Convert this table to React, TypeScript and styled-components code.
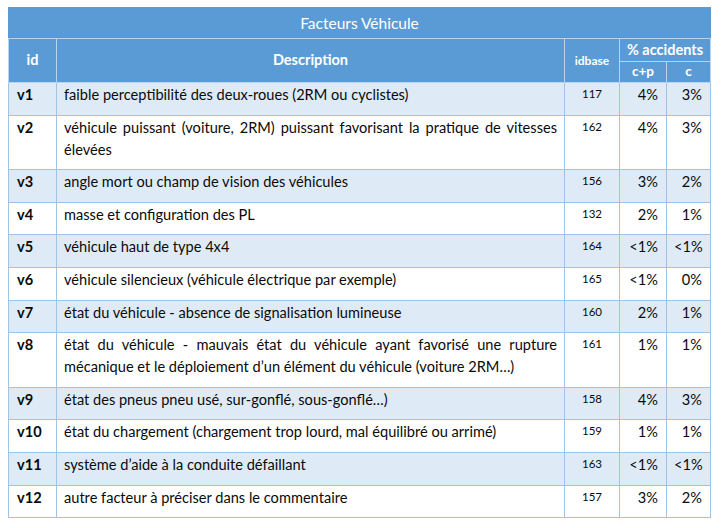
import React from "react";
import styled, { createGlobalStyle } from "styled-components";

interface Factor {
  id: string;
  description: string;
  idbase: number;
  cp: string;
  c: string;
}

const factors: Factor[] = [
  { id: "v1", description: "faible perceptibilité des deux-roues (2RM ou cyclistes)", idbase: 117, cp: "4%", c: "3%" },
  { id: "v2", description: "véhicule puissant (voiture, 2RM) puissant favorisant la pratique de vitesses élevées", idbase: 162, cp: "4%", c: "3%" },
  { id: "v3", description: "angle mort ou champ de vision des véhicules", idbase: 156, cp: "3%", c: "2%" },
  { id: "v4", description: "masse et configuration des PL", idbase: 132, cp: "2%", c: "1%" },
  { id: "v5", description: "véhicule haut de type 4x4", idbase: 164, cp: "<1%", c: "<1%" },
  { id: "v6", description: "véhicule silencieux (véhicule électrique par exemple)", idbase: 165, cp: "<1%", c: "0%" },
  { id: "v7", description: "état du véhicule - absence de signalisation lumineuse", idbase: 160, cp: "2%", c: "1%" },
  { id: "v8", description: "état du véhicule - mauvais état du véhicule ayant favorisé une rupture mécanique et le déploiement d’un élément du véhicule (voiture 2RM…)", idbase: 161, cp: "1%", c: "1%" },
  { id: "v9", description: "état des pneus pneu usé, sur-gonflé, sous-gonflé…)", idbase: 158, cp: "4%", c: "3%" },
  { id: "v10", description: "état du chargement (chargement trop lourd, mal équilibré ou arrimé)", idbase: 159, cp: "1%", c: "1%" },
  { id: "v11", description: "système d’aide à la conduite défaillant", idbase: 163, cp: "<1%", c: "<1%" },
  { id: "v12", description: "autre facteur à préciser dans le commentaire", idbase: 157, cp: "3%", c: "2%" },
];

const GlobalStyle = createGlobalStyle`
  body {
    margin: 0;
    background: #ffffff;
    font-family: "Lato", "Noto Sans", sans-serif;
  }
`;

const Page = styled.div`
  padding: 7px 13px 0 8px;
`;

const Table = styled.table`
  width: 702px;
  border-collapse: collapse;
  table-layout: fixed;
  font-size: 14.6px;
  color: #0a0a0a;
`;

const HeadCell = styled.th<{ $size: number; $h: number }>`
  background: #5b9bd5;
  color: #ffffff;
  font-weight: 700;
  font-size: ${(p) => p.$size}px;
  text-align: center;
  border: 1px solid #b7d3ee;
  padding: 0 2px;
  height: ${(p) => p.$h}px;
  box-sizing: border-box;
  line-height: 1;
`;

const TitleCell = styled.th`
  background: #5b9bd5;
  color: #ffffff;
  font-weight: 400;
  font-size: 15.5px;
  text-align: center;
  height: 30px;
  padding: 0;
  border: 1px solid #5b9bd5;
  border-bottom: 1px solid #b7d3ee;
`;

const Row = styled.tr<{ $shaded: boolean }>`
  background: ${(p) => (p.$shaded ? "#deebf7" : "#ffffff")};
`;

const Cell = styled.td`
  border: 1px solid #9dc3e6;
  vertical-align: top;
  padding: 1px 7px 8.6px 7px;
  line-height: 22px;
`;

const IdCell = styled(Cell)`
  font-weight: 700;
  padding-left: 8px;
`;

const DescCell = styled(Cell)`
  text-align: justify;
`;

const BaseCell = styled(Cell)`
  text-align: center;
  font-size: 11.5px;
  line-height: 20px;
  padding-bottom: 10.6px;
`;

const PctCell = styled(Cell)`
  text-align: right;
  padding-right: 8px;
`;

export default function App() {
  return (
    <>
      <GlobalStyle />
      <Page>
        <Table>
          <colgroup>
            <col style={{ width: 48 }} />
            <col style={{ width: 508 }} />
            <col style={{ width: 55 }} />
            <col style={{ width: 47 }} />
            <col style={{ width: 44 }} />
          </colgroup>
          <thead>
            <tr>
              <TitleCell colSpan={5}>Facteurs Véhicule</TitleCell>
            </tr>
            <tr>
              <HeadCell rowSpan={2} $size={14.5} $h={23}>
                id
              </HeadCell>
              <HeadCell rowSpan={2} $size={14.5} $h={23}>
                Description
              </HeadCell>
              <HeadCell rowSpan={2} $size={12} $h={23}>
                idbase
              </HeadCell>
              <HeadCell colSpan={2} $size={14.5} $h={23}>
                % accidents
              </HeadCell>
            </tr>
            <tr>
              <HeadCell $size={13.5} $h={21}>
                c+p
              </HeadCell>
              <HeadCell $size={13.5} $h={21}>
                c
              </HeadCell>
            </tr>
          </thead>
          <tbody>
            {factors.map((f, i) => (
              <Row key={f.id} $shaded={i % 2 === 0}>
                <IdCell>{f.id}</IdCell>
                <DescCell>{f.description}</DescCell>
                <BaseCell>{f.idbase}</BaseCell>
                <PctCell>{f.cp}</PctCell>
                <PctCell>{f.c}</PctCell>
              </Row>
            ))}
          </tbody>
        </Table>
      </Page>
    </>
  );
}
